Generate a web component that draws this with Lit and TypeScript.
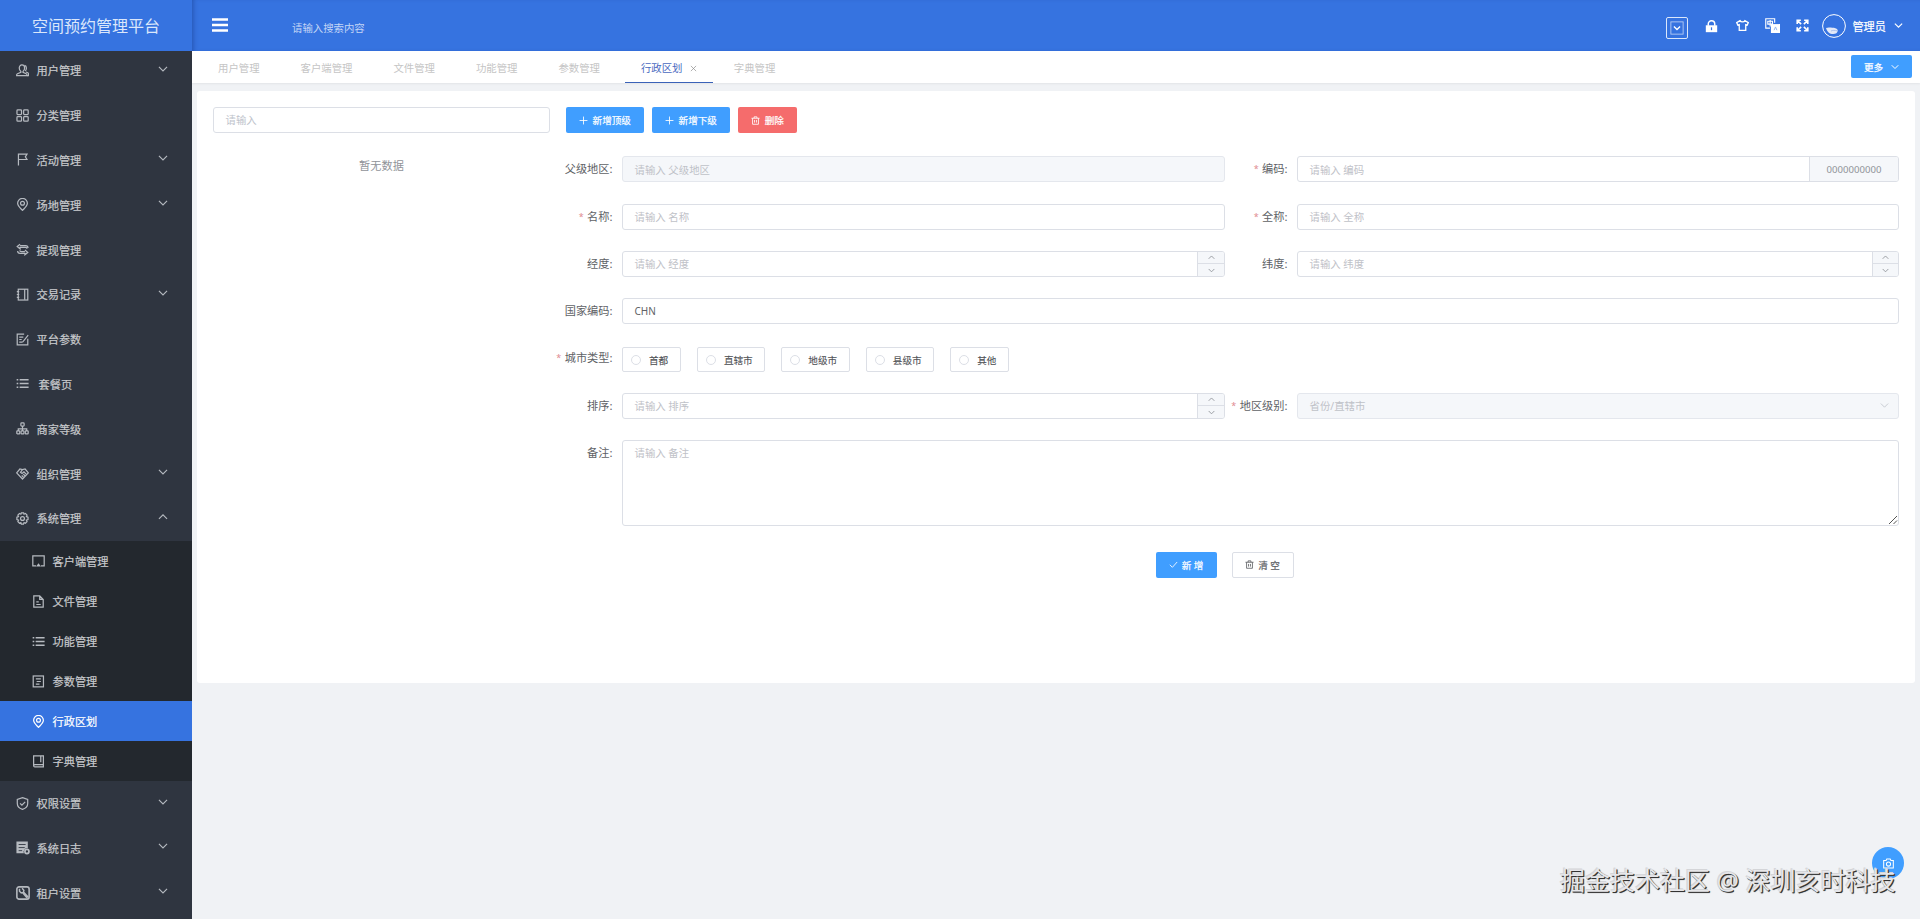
import { LitElement, html, css, svg } from "lit";
import { customElement } from "lit/decorators.js";

const ICONS: Record<string, unknown> = {
  user: svg`<path d="M6 9.300C4.600 8.200 4 6.700 4 4.900 4 2.700 5.300 1.200 7.300 1.200s3.300 1.500 3.300 3.700c0 1.800-.6 3.300-2 4.400v1l4 1.700c.7.3.9.8.9 1.500v.8H.8v-.8c0-.8.3-1.200 1-1.500L6 10.300z"/><path d="M10.500 1.800c1.600.4 2.300 1.600 2.300 3.200 0 1.400-.4 2.600-1.300 3.600M12.200 9.800l2.300 1c.6.300.8.700.8 1.400v2h-2"/>`,
  grid: svg`<rect x="1.200" y="1.200" width="5.600" height="5.600" rx="1"/><rect x="9.400" y="1.200" width="5.600" height="5.600" rx="1"/><rect x="1.200" y="9.400" width="5.600" height="5.600" rx="1"/><rect x="9.400" y="9.400" width="5.600" height="5.600" rx="1"/>`,
  flag: svg`<path d="M3 15.500V1.500h10.500l-2 3.200 2 3.300H3"/>`,
  pin: svg`<path d="M8 15.300C5 12 2 9.600 2 6.500a6 6 0 0 1 12 0C14 9.600 11 12 8 15.300z"/><circle cx="8" cy="6.500" r="2.400"/>`,
  swap: svg`<path d="M5 1.500 1.500 4.300 5 7.200V5.500h6.700c1 0 1.800.6 1.800 1.600M5 3.200h6.800c2 0 3 1.500 3 3M11 8.700l3.500 2.900-3.500 2.900v-1.800H5c-2 0-3-1-3-3M11 10.500H6.500c-1 0-1.800-.5-2-1.500"/>`,
  notebook: svg`<rect x="2.800" y="1.500" width="11.700" height="13.300"/><path d="M10.700 1.500v13M1 4.500h3M1 8h3M1 11.500h3"/>`,
  edit: svg`<path d="M10 1.500H1.500v13h13V7M4 5h5M4 8h3M4 11.200h3l1.500-.4L15 2.500"/>`,
  list: svg`<path d="M4.500 3.500h11M4.500 8h11M4.500 12.500h11M.8 3.500h2M.8 8h2M.8 12.500h2" stroke-width="1.800"/>`,
  org: svg`<rect x="6" y="1" width="4" height="4" rx="1"/><rect x="1" y="11" width="3.600" height="3.500" rx=".8"/><rect x="6.200" y="11" width="3.600" height="3.500" rx=".8"/><rect x="11.400" y="11" width="3.600" height="3.500" rx=".8"/><path d="M8 5v6M2.800 11V8.500h10.400V11"/>`,
  hands: svg`<path d="M8 14.800.8 7.200l4-4.700L8 3.300l3.200-.8 4 4.700zM8 3.300 5.500 6.500 7.500 8l2.300-2L13 9.300M7 10.500l2 1.800M9 8.800l2 1.900"/>`,
  gear: svg`<circle cx="8" cy="8" r="2.400"/><path d="M6.600 1h2.800l.5 1.700 1.700-.8 2 2-.8 1.700 2 .8v3l-2 .7.8 1.800-2 2-1.700-.8-.7 1.900H6.600l-.6-1.900-1.700.8-2-2 .8-1.800-2-.7v-3l2-.8-.8-1.700 2-2 1.700.8z"/>`,
  monitor: svg`<path d="M5 13.500H1V1.200h14v12.300h-4"/><path d="M8 10.300 11 14.200H5z" fill="currentColor" stroke="none"/>`,
  file: svg`<path d="M2.200 1.200h7.300l4.300 4.300v9.300H2.200zM9.500 1.200v4.300h4.300M5.300 8.500h3M5.300 11.700h5.400"/>`,
  doc: svg`<rect x="1.500" y="1.200" width="12.600" height="13.400"/><path d="M4.700 4.800h6.200M5.700 8h5.200M4.700 11.200h4.500"/>`,
  book: svg`<path d="M2 13V1.200h12v13.500H3.500c-1 0-1.500-.8-1.500-1.500s.7-1.300 1.500-1.300H14M10.800 1.500V9"/>`,
  shield: svg`<path d="M8 .8 14.400 3v5c0 3.700-2.700 6-6.400 7.300C4.300 14 1.600 11.700 1.600 8V3z"/><path d="m5 7.800 2.300 2.300L11.300 6"/>`,
  log: svg`<path d="M.5.500h13v8A4 4 0 0 0 9 14H.5z" fill="currentColor" stroke="none"/><path d="M3 4h8M3 7.500h7M3 11h4" stroke="#2f3540" stroke-width="1"/><circle cx="12.500" cy="12" r="2.300" stroke-width="2"/>`,
  tool: svg`<rect x="1" y="1" width="14" height="14" rx="2.500" stroke-width="1.800"/><path d="M4 3v3l2 2 1.500-.5 5 6M7 2.500l2 2.500-.5 2L14 13" stroke-width="1.700"/>`,
  down: svg`<path d="m1.500 4.500 6.500 6.500 6.500-6.500"/>`,
  up: svg`<path d="m1.500 11 6.500-6.500 6.500 6.500"/>`,
  plus: svg`<path d="M8 1v14M1 8h14"/>`,
  check: svg`<path d="m1.500 8.500 4.500 4.500 8.500-9.500"/>`,
  close: svg`<path d="m2 2 12 12M14 2 2 14"/>`,
  trash: svg`<path d="M.8 4h14.400M5.500 4V1.500h5V4M2.800 4v10.700h10.400V4M6.300 7v4.700M9.700 7v4.700"/>`,
  camera: svg`<path d="M1 3.500h3.500l1-2h5l1 2H15v11H1z"/><circle cx="8" cy="8.800" r="3"/>`,
  menu: svg`<path d="M0 2.500h16M0 8h16M0 13.500h16" stroke-width="2.400"/>`,
  lock: svg`<path d="M4 7V5a4 4 0 0 1 8 0v2" stroke-width="1.800"/><path d="M1 6.500h14V15H1z" fill="currentColor" stroke="none"/><path d="M8 9v3.500" stroke="#3673e0" stroke-width="1.500"/>`,
  shirt: svg`<path d="M5 2 .8 4.500l1.500 3 1.700-.6V14h8V6.900l1.700.6 1.500-3L11 2C10 4 6 4 5 2z" stroke-width="1.600"/>`,
  lang: svg`<path d="M10.300 5V.8H.8v10h4.500M3 3.500h5v3H3zM5.500 2v7" stroke-width="1.200"/><path d="M6.300 6.500h9.700V16H6.300z" fill="currentColor" stroke="none"/><path d="m9.700 13 1.500-3.500 1.500 3.500" stroke="#8fb2ee" stroke-width="1"/>`,
  full: svg`<path d="M1.500 6V1.500H6M10 1.500h4.500V6M14.500 10v4.500H10M6 14.500H1.500V10M1.500 1.500l4.800 4.800M14.500 1.500 9.700 6.300M14.500 14.500 9.700 9.700M1.500 14.500l4.800-4.800" stroke-width="2"/>`,
  boxdown: svg`<rect x="1" y="1" width="14" height="14" stroke-width="1" opacity=".65"/><path d="m4.500 6.300 3.500 3.500 3.500-3.500"/>`,
};

const icon = (name: string, cls = "") =>
  html`<svg class="ic ${cls}" viewBox="0 0 16 16" fill="none" stroke="currentColor" stroke-width="1.500">${ICONS[name]}</svg>`;

interface Item { icon: string; text: string; arrow?: string; cls?: string; }

const MENU_TOP: Item[] = [
  { icon: "user", text: "用户管理", arrow: "down" },
  { icon: "grid", text: "分类管理" },
  { icon: "flag", text: "活动管理", arrow: "down" },
  { icon: "pin", text: "场地管理", arrow: "down" },
  { icon: "swap", text: "提现管理" },
  { icon: "notebook", text: "交易记录", arrow: "down" },
  { icon: "edit", text: "平台参数" },
  { icon: "list", text: "套餐页", cls: "shift" },
  { icon: "org", text: "商家等级" },
  { icon: "hands", text: "组织管理", arrow: "down" },
  { icon: "gear", text: "系统管理", arrow: "up" },
];
const MENU_SUB: Item[] = [
  { icon: "monitor", text: "客户端管理" },
  { icon: "file", text: "文件管理" },
  { icon: "list", text: "功能管理" },
  { icon: "doc", text: "参数管理" },
  { icon: "pin", text: "行政区划", cls: "active" },
  { icon: "book", text: "字典管理" },
];
const MENU_END: Item[] = [
  { icon: "shield", text: "权限设置", arrow: "down" },
  { icon: "log", text: "系统日志", arrow: "down", cls: "big" },
  { icon: "tool", text: "租户设置", arrow: "down", cls: "big" },
];
const TABS = ["用户管理", "客户端管理", "文件管理", "功能管理", "参数管理", "行政区划", "字典管理"];

@customElement("app-sidebar")
class AppSidebar extends LitElement {
  static styles = css`
    :host { display: flex; flex-direction: column; width: 192px; height: 919px; flex: none; background: #2f3540; color: #c8cacd; overflow: hidden; }
    .logo { flex: none; height: 51px; line-height: 52px; background: #3673e0; color: #dbe7fb; font-size: 16px; text-align: center; z-index: 1; }
    .menu { margin-top: -3px; flex: none; }
    .item { display: flex; align-items: center; height: 44.8px; padding: 0 24px 0 16px; font-size: 11.2px; box-sizing: border-box; }
    .ic { width: 13px; height: 13px; margin: 0 7.500px 0 0; flex: none; color: #b6bac0; }
    .big .ic { width: 14px; height: 14px; margin-right: 6.500px; }
    .text { flex: 1; -webkit-text-stroke: .2px; }
    .item .ic.arrow { width: 10px; height: 10px; margin: -3px 0 0; stroke-width: 1.8; }
    .shift .text { padding-left: 2px; }
    .sub { background: #23282e; }
    .sub .item { height: 40px; padding-left: 32px; }
    .sub .text { padding-top: 1px; }
    .sub .ic { margin-top: 1px; }
    .sub .active { background: #3673e0; color: #fff; }
    .active .ic { color: #fff; }
  `;
  item(i: Item) {
    return html`<div class="item ${i.cls ?? ""}">${icon(i.icon)}<span class="text">${i.text}</span>${i.arrow ? icon(i.arrow, "arrow") : ""}</div>`;
  }
  render() {
    return html`<div class="logo">空间预约管理平台</div>
      <div class="menu">
        ${MENU_TOP.map((i) => this.item(i))}
        <div class="sub">${MENU_SUB.map((i) => this.item(i))}</div>
        ${MENU_END.map((i) => this.item(i))}
      </div>`;
  }
}

@customElement("app-header")
class AppHeader extends LitElement {
  static styles = css`
    :host { display: block; }
    .bar { display: flex; align-items: center; height: 51px; background: #3673e0; color: #fff; padding: 0 17px 0 20px; box-sizing: border-box; box-shadow: inset 4px 0 5px -3px rgba(0,20,80,.35); }
    .ic { flex: none; width: 13px; height: 13px; }
    .ic.menu { width: 16px; height: 16px; margin-top: -1px; }
    .search { margin-left: 64px; font-size: 10.4px; color: #c3d5f6; padding-top: 3px; flex: 1; }
    .tools { display: flex; align-items: center; }
    .box { width: 20px; height: 20px; border: 1px solid #dbe7fb; border-radius: 2px; display: flex; align-items: center; justify-content: center; margin: 5px 17px 0 0; }
    .ic.boxdown { width: 14px; height: 14px; }
    .ic.lock { margin: 1px 18px 0 0; }
    .ic.shirt { margin-right: 16px; }
    .ic.lang { width: 15px; height: 15px; margin-right: 16px; }
    .ic.full { margin-right: 13px; }
    .avatar { width: 24px; height: 24px; }
    .name { font-size: 11.2px; margin: 0 8px 0 6px; -webkit-text-stroke: .2px; }
    .ic.caret { width: 9px; height: 9px; stroke-width: 2; }
    .tabs { display: flex; gap: 8.950px; height: 32px; background: #fff; font-size: 10.4px; color: #c5c5c5; position: relative; padding-left: 10px; padding-right: 8px; box-shadow: 0 1px 2px rgba(0,0,0,.06); }
    .tab { padding: 0 16px; height: 32px; line-height: 36px; padding-top: 2px; box-sizing: border-box; display: flex; align-items: center; }
    .tab.active { color: #4968c0; border-bottom: 1px solid #3a62b8; padding-top: 3px; margin-right: -4.600px; }
    .ic.x { width: 7px; height: 7px; margin-left: 8px; color: #888; }
    .more { margin: 4px 0 0 auto; height: 23px; width: 61px; border-radius: 2px; background: #409eff; color: #fff; display: flex; align-items: center; justify-content: center; gap: 8px; font-size: 9.6px; -webkit-text-stroke: .25px; }
    .more .ic { width: 8px; height: 8px; stroke-width: 2; }
  `;
  render() {
    return html`<div class="bar">
        ${icon("menu", "menu")}<span class="search">请输入搜索内容</span>
        <div class="tools">
          <div class="box">${icon("boxdown", "boxdown")}</div>
          ${icon("lock", "lock")}${icon("shirt", "shirt")}${icon("lang", "lang")}${icon("full", "full")}
          <svg class="avatar" viewBox="0 0 24 24"><circle cx="12" cy="12" r="11.400" fill="none" stroke="#fff"/><path d="M4 14c1.500-.6 3-.8 4.500-.4 2 .2 3-.2 4.200.4 2 .4 3 1.300 3 2.800 0 2-2 3.300-4.500 3.300C7.700 20.100 5 17.800 4 14z" fill="#e3e9f8"/><path d="M9 17c1.500-.8 4-.8 6-.2" stroke="#9fb8ea" stroke-width=".8" fill="none"/></svg>
          <span class="name">管理员</span>${icon("down", "caret")}
        </div>
      </div>
      <div class="tabs">
        ${TABS.map((t) => t === "行政区划"
          ? html`<div class="tab active">${t}${icon("close", "x")}</div>`
          : html`<div class="tab">${t}</div>`)}
        <div class="more">更多${icon("down")}</div>
      </div>`;
  }
}

@customElement("region-form")
class RegionForm extends LitElement {
  static styles = css`
    :host { display: block; flex: 1; min-width: 0; }
    .ic { width: 9px; height: 9px; flex: none; }
    .btns { display: flex; gap: 8px; padding-left: 4px; }
    .btn { box-sizing: border-box; height: 26px; border-radius: 2px; color: #fff; background: #409eff; font-size: 9.6px; display: flex; align-items: center; justify-content: center; gap: 4.500px; width: 78px; -webkit-text-stroke: .2px; }
    .del { background: #f56c6c; width: 59px; }
    .form { display: grid; grid-template-columns: 663px 674px; grid-auto-rows: 47.3px; margin-top: 23.300px; }
    .field { display: flex; align-items: flex-start; }
    .wide { grid-column: span 2; }
    .lab { flex: none; width: 60px; padding-right: 9.500px; box-sizing: border-box; text-align: right; font-size: 11.2px; line-height: 26px; color: #606266; white-space: nowrap; display: flex; justify-content: flex-end; }
    .right .lab { width: 72px; }
    .req { color: #e08a90; margin-right: 3.500px; font-size: 9px; }
    .inp { flex: 1; min-width: 0; height: 26px; box-sizing: border-box; border: 1px solid #dcdfe6; border-radius: 3px; font-size: 10.4px; color: #606266; display: flex; align-items: center; background: #fff; overflow: hidden; }
    .ph { flex: 1; padding-left: 11.500px; color: #bfc2c8; }
    .val { color: #606266; font-size: 10px; }
    .dis { background: #f5f7fa; border-color: #e4e7ed; }
    .dis .ic { margin-right: 9px; color: #c0c4cc; }
    .add { width: 89px; box-sizing: border-box; height: 100%; border-left: 1px solid #dcdfe6; background: #f5f7fa; color: #909399; display: flex; align-items: center; justify-content: center; font-size: 9.6px; }
    .spin { width: 27px; height: 100%; box-sizing: border-box; border-left: 1px solid #dcdfe6; background: #f5f7fa; color: #909399; display: flex; flex-direction: column; }
    .right .spin { width: 26px; }
    .spin span { flex: 1; display: flex; align-items: center; justify-content: center; }
    .spin span + span { border-top: 1px solid #dcdfe6; }
    .spin .ic { width: 7px; height: 7px; stroke-width: 2; }
    .radios { display: flex; gap: 16px; padding-top: 1.500px; }
    .radio { box-sizing: border-box; height: 25px; border: 1px solid #dcdfe6; border-radius: 2px; display: flex; align-items: center; padding: 1px 11.700px 0 8px; gap: 8px; font-size: 9.6px; color: #505256; -webkit-text-stroke: .1px; white-space: nowrap; }
    .dot { width: 10px; height: 10px; box-sizing: border-box; border: 1px solid #dcdfe6; border-radius: 50%; }
    .area { height: 86px; align-items: flex-start; line-height: 24px; }
    .grip { width: 10px; height: 10px; align-self: flex-end; color: #555; }
    .foot { display: flex; gap: 15px; justify-content: center; margin-top: 64.600px; padding-right: 12px; }
    .foot .btn { width: 62px; gap: 4px; }
    .foot .save { width: 61px; }
    .foot .plain { background: #fff; color: #606266; border: 1px solid #dcdfe6; }
  `;
  field(label: string, req: boolean, body: unknown, cls = "") {
    return html`<div class="field ${cls}"><div class="lab">${req ? html`<span class="req">*</span>` : ""}${label}:</div>${body}</div>`;
  }
  input(ph: string, tail: unknown = "", cls = "") {
    return html`<div class="inp ${cls}"><span class="ph">${ph}</span>${tail}</div>`;
  }
  render() {
    const spin = html`<div class="spin"><span>${icon("up")}</span><span>${icon("down")}</span></div>`;
    return html`<div class="btns">
        <div class="btn">${icon("plus")}新增顶级</div>
        <div class="btn">${icon("plus")}新增下级</div>
        <div class="btn del">${icon("trash")}删除</div>
      </div>
      <div class="form">
        ${this.field("父级地区", false, this.input("请输入 父级地区", "", "dis"))}
        ${this.field("编码", true, this.input("请输入 编码", html`<div class="add">0000000000</div>`), "right")}
        ${this.field("名称", true, this.input("请输入 名称"))}
        ${this.field("全称", true, this.input("请输入 全称"), "right")}
        ${this.field("经度", false, this.input("请输入 经度", spin))}
        ${this.field("纬度", false, this.input("请输入 纬度", spin), "right")}
        ${this.field("国家编码", false, html`<div class="inp"><span class="ph val">CHN</span></div>`, "wide")}
        ${this.field("城市类型", true, html`<div class="radios">${["首都", "直辖市", "地级市", "县级市", "其他"].map((r) => html`<div class="radio"><span class="dot"></span>${r}</div>`)}</div>`, "wide")}
        ${this.field("排序", false, this.input("请输入 排序", spin))}
        ${this.field("地区级别", true, this.input("省份/直辖市", icon("down"), "dis"), "right")}
        ${this.field("备注", false, this.input("请输入 备注", html`<svg class="grip" viewBox="0 0 10 10" stroke="currentColor" fill="none"><path d="M1 9 9 1M5.500 9 9 5.500"/></svg>`, "area"), "wide")}
      </div>
      <div class="foot">
        <div class="btn save">${icon("check")}新 增</div>
        <div class="btn plain">${icon("trash")}清 空</div>
      </div>`;
  }
}

@customElement("app-root")
class AppRoot extends LitElement {
  static styles = css`
    :host { display: flex; width: 1920px; height: 919px; overflow: hidden; position: relative; background: #f0f2f5; font-family: "Noto Sans", "Noto Sans CJK SC", sans-serif; }
    .main { flex: 1; min-width: 0; display: flex; flex-direction: column; }
    .card { margin: 8px 5px 0; height: 592px; box-sizing: border-box; padding: 16px; background: #fff; border-radius: 3px; display: flex; gap: 12px; }
    .tree { width: 337px; flex: none; }
    .filter { height: 26px; box-sizing: border-box; border: 1px solid #dcdfe6; border-radius: 3px; padding: 0 11.500px; font-size: 10.4px; line-height: 25px; color: #c0c4cc; }
    .empty { margin-top: 23px; text-align: center; font-size: 11.2px; line-height: 20px; color: #909399; }
    .fab { position: absolute; left: 1872px; top: 847px; width: 32px; height: 32px; border-radius: 50%; background: #409eff; color: #fff; display: flex; align-items: center; justify-content: center; }
    .fab .ic { width: 11px; height: 11px; }
    .mark { position: absolute; left: 1560px; top: 862px; font-size: 25px; line-height: 36px; color: #e6e6e9; text-shadow: 1px 1px 0 #333, 1px 1px 1px #444, -1px -1px 0 #d4d5d8; white-space: nowrap; }
  `;
  render() {
    return html`<app-sidebar></app-sidebar>
      <div class="main">
        <app-header></app-header>
        <div class="card">
          <div class="tree"><div class="filter">请输入</div><div class="empty">暂无数据</div></div>
          <region-form></region-form>
        </div>
      </div>
      <div class="fab">${icon("camera")}</div>
      <div class="mark">掘金技术社区 @ 深圳亥时科技</div>`;
  }
}
